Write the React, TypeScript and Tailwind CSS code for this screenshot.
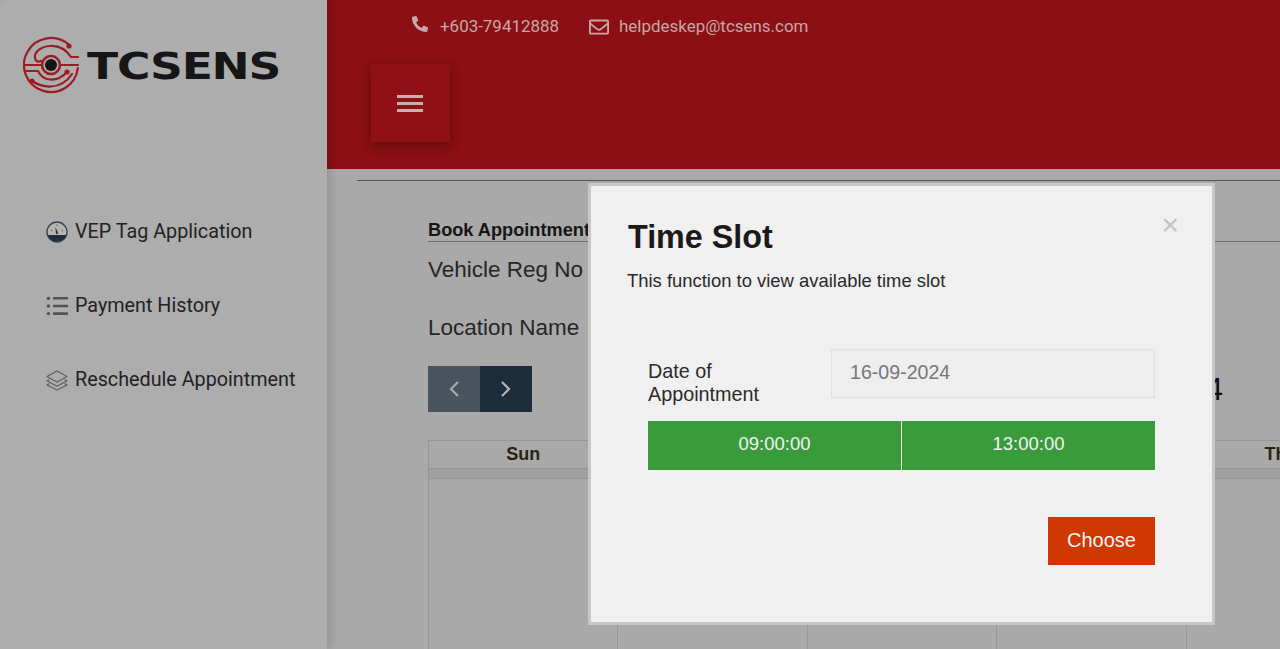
import React from "react";
import { FaPhoneAlt, FaRegEnvelope } from "react-icons/fa";

const Logo = () => (
  <svg width="58" height="58" viewBox="0 0 58 58" fill="none" stroke="#9c1c22" strokeWidth="2.2" strokeLinecap="round" className="shrink-0">
    <path d="M46 8.9 A 27 27 0 1 0 54.8 32" />
    <path d="M9 45 Q 18 51 28 50.5 Q 41 50 49 38" />
    <path d="M55 21 H 48 C 42 12 34 9.5 27 10 C 18 10.5 11 16 12 22 C 12.5 25 15 26.5 18 25" />
    <path d="M2 29 H 19 M37 29 H 55" />
    <path d="M44 36 Q 37 44 27 43.5 Q 19 43 15 35 H 3" />
    <circle cx="28" cy="29" r="9" strokeWidth="2.6" />
    <circle cx="28" cy="29" r="6" fill="#141414" stroke="none" />
    <circle cx="46" cy="10" r="2.6" fill="#9c1c22" stroke="none" />
    <circle cx="9" cy="45" r="2.6" fill="#9c1c22" stroke="none" />
    <circle cx="44" cy="36" r="2.6" fill="#9c1c22" stroke="none" />
  </svg>
);

const Gauge = () => (
  <svg width="22" height="22" viewBox="0 0 22 22" className="shrink-0">
    <circle cx="11" cy="11" r="10" fill="#b5b5b5" stroke="#3d4650" strokeWidth="1.4" />
    <path d="M1.6 14 H20.4 A10 10 0 0 1 1.6 14Z" fill="#1f2d3d" />
    <path d="M9.4 6 L12.4 12.5 L10 13Z" fill="#333" />
    <path d="M5 9 L6.2 10 M16.8 9 L15.6 10 M11 3.5 V5" stroke="#555" strokeWidth="1" />
  </svg>
);

const ListIcon = () => (
  <svg width="22" height="22" viewBox="0 0 22 22" fill="#525252" className="shrink-0">
    <circle cx="2.4" cy="3.4" r="1.7" />
    <circle cx="2.4" cy="11" r="1.7" />
    <circle cx="2.4" cy="18.6" r="1.7" />
    <rect x="7" y="2" width="15" height="2.6" rx="0.6" />
    <rect x="7" y="9.7" width="15" height="2.6" rx="0.6" />
    <rect x="7" y="17.3" width="15" height="2.6" rx="0.6" />
  </svg>
);

const Layers = () => (
  <svg width="22" height="22" viewBox="0 0 22 22" fill="none" stroke="#5c5c5c" strokeWidth="1.1" strokeLinejoin="round" className="shrink-0">
    <path d="M11 2 L21 7.5 L11 13 L1 7.5Z" />
    <path d="M3.4 10.4 L1 11.7 L11 17.2 L21 11.7 L18.6 10.4" />
    <path d="M3.4 14.6 L1 15.9 L11 21 L21 15.9 L18.6 14.6" />
  </svg>
);

const navItems = [
  { label: "VEP Tag Application", icon: <Gauge /> },
  { label: "Payment History", icon: <ListIcon /> },
  { label: "Reschedule Appointment", icon: <Layers /> },
];

const days = ["Sun", "Mon", "Tue", "Wed", "Thu", "Fri", "Sat"];

export default function App() {
  return (
    <div className="relative flex h-[649px] w-[1280px] overflow-hidden bg-[#a9a9a9] font-['Roboto',sans-serif]">
      <aside className="z-10 flex w-[327px] shrink-0 flex-col rounded-tl-[10px] bg-[#adadad] pl-[23px] shadow-[4px_0_8px_rgba(0,0,0,0.12)]">
        <div className="mt-[36px] flex items-center gap-[6px]">
          <Logo />
          <span className="relative top-[1px] origin-left scale-x-[1.2] font-['DejaVu_Sans',sans-serif] text-[38px] leading-[58px] font-bold tracking-[-1px] text-[#161616]">
            TCSENS
          </span>
        </div>
        <nav className="mt-[126px] flex flex-col gap-[50px] pl-[23px]">
          {navItems.map((item) => (
            <div key={item.label} className="flex h-[24px] items-center gap-[7px] text-[19.75px] text-[#222]">
              {item.icon}
              <span>{item.label}</span>
            </div>
          ))}
        </nav>
      </aside>

      <div className="flex min-w-0 flex-1 flex-col">
        <header className="h-[169px] shrink-0 bg-[#8b0f14] pl-[44px]">
          <div className="ml-[41px] flex h-[52px] items-center pt-[1px] text-[16.95px] text-[#c7a7a8]">
            <FaPhoneAlt className="-mt-[5px] h-[16px] w-[16px]" />
            <span className="ml-[12px]">+603-79412888</span>
            <FaRegEnvelope className="ml-[30px] h-[20px] w-[20px]" />
            <span className="ml-[10px]">helpdeskep@tcsens.com</span>
          </div>
          <div className="mt-[12px] flex h-[78px] w-[79px] flex-col items-center justify-center gap-[4px] bg-[#8f1016] pr-[2px] shadow-[0_4px_10px_rgba(0,0,0,0.3)]">
            <span className="h-[3px] w-[26px] bg-[#c9aeae]" />
            <span className="h-[3px] w-[26px] bg-[#c9aeae]" />
            <span className="h-[3px] w-[26px] bg-[#c9aeae]" />
          </div>
        </header>

        <main className="ml-[30px] mt-[11px] min-w-0 flex-1 border-t border-[#555] font-['Liberation_Sans',sans-serif]">
          <div className="mt-[39px] ml-[71px] w-[852px] border-b border-[#6f6f6f] text-[18.2px] leading-[21px] font-bold text-[#161616]">
            Book Appointment
          </div>
          <div className="mt-[15px] ml-[71px] text-[22.5px] leading-[25px] text-[#262626]">Vehicle Reg No</div>
          <div className="mt-[33px] ml-[71px] text-[22.5px] leading-[25px] text-[#262626]">Location Name</div>
          <div className="mt-[26px] ml-[71px] flex w-[795px] items-center justify-between">
            <div className="flex">
              <div className="flex h-[46px] w-[52px] items-center justify-center bg-[#4a545f]">
                <svg width="12" height="18" viewBox="0 0 12 18" fill="none" stroke="#a9a9a9" strokeWidth="2.2"><path d="M10 2 L3 9 L10 16" /></svg>
              </div>
              <div className="flex h-[46px] w-[52px] items-center justify-center bg-[#1d2c3b]">
                <svg width="12" height="18" viewBox="0 0 12 18" fill="none" stroke="#b5b5b5" strokeWidth="2.2"><path d="M2 2 L9 9 L2 16" /></svg>
              </div>
            </div>
            <div className="text-[32px] leading-[46px] text-[#111]">September 2024</div>
          </div>
          <div className="mt-[28px] ml-[71px] w-[1327px]">
            <div className="grid grid-cols-7 border-t border-l border-[#979797]">
              {days.map((d) => (
                <div key={d} className="h-[27px] border-r border-[#979797] text-center text-[18px] leading-[27px] font-bold text-[#2b2212]">
                  {d}
                </div>
              ))}
            </div>
            <div className="h-[11px] border-y border-l border-[#959595] bg-[#a0a0a0]" />
            <div className="grid grid-cols-7 border-l border-[#979797]">
              {days.map((d) => (
                <div key={d} className="h-[171px] border-r border-[#979797]" />
              ))}
            </div>
          </div>
        </main>
      </div>

      <div className="absolute top-[183px] left-[588px] z-20 h-[442px] w-[627px] border-[3px] border-[#c8c8c8] bg-[#f0f0f0] font-['Liberation_Sans',sans-serif]">
        <div className="relative pt-[33px] pl-[37px]">
          <span className="absolute top-[24px] right-[33px] text-[30px] leading-[30px] text-[#c4c4c4]">×</span>
          <h2 className="text-[32.3px] leading-[37px] font-bold text-[#1a1a1a]">Time Slot</h2>
          <p className="mt-[14px] -ml-[1px] text-[18.43px] leading-[21px] text-[#2a2a2a]">
            This function to view available time slot
          </p>
        </div>
        <div className="mt-[58px] ml-[57px] w-[507px]">
          <div className="flex items-start">
            <div className="mt-[11px] w-[183px] text-[19.8px] leading-[23px] text-[#2b2b2b]">
              Date of
              <br />
              Appointment
            </div>
            <div className="flex h-[49px] flex-1 items-center border border-[#e0e0e0] bg-[#eeeeee] pb-[1px] pl-[18px] text-[19.6px] text-[#777]">
              16-09-2024
            </div>
          </div>
          <div className="mt-[15px] flex h-[49px] gap-px">
            <div className="flex flex-1 items-center justify-center bg-[#3a9b3c] pb-[3px] text-[18.5px] text-[#f2f2f2]">09:00:00</div>
            <div className="flex flex-1 items-center justify-center bg-[#3a9b3c] pb-[3px] text-[18.5px] text-[#f2f2f2]">13:00:00</div>
          </div>
          <div className="mt-[47px] flex justify-end">
            <div className="flex h-[48px] w-[107px] items-center justify-center bg-[#cf3800] pb-[2px] text-[20px] text-[#f5f5f5]">Choose</div>
          </div>
        </div>
      </div>
    </div>
  );
}
